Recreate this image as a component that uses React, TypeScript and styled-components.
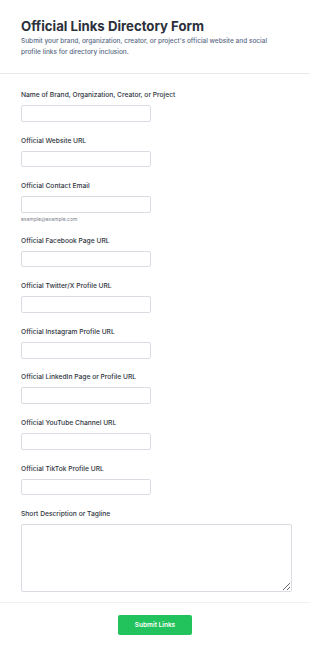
import React from "react";
import styled, { createGlobalStyle } from "styled-components";

const GlobalStyle = createGlobalStyle`
  body {
    margin: 0;
    background: #ffffff;
    font-family: Inter, "Noto Sans", "Liberation Sans", sans-serif;
  }
  * {
    box-sizing: border-box;
  }
`;

const Page = styled.div`
  width: 310px;
  background: #ffffff;
`;

const Header = styled.header`
  padding: 17.5px 21px 15px;
  border-bottom: 1px solid #e8eaee;
`;

const Title = styled.h1`
  margin: 0;
  font-size: 13.2px;
  line-height: 16px;
  font-weight: 700;
  color: #2b303b;
`;

const Subtitle = styled.p`
  margin: 2.5px 0 0;
  font-size: 6.5px;
  line-height: 11px;
  font-weight: 500;
  color: #5a6a84;
  max-width: 265px;
`;

const Body = styled.div`
  padding: 16px 18px 10px 21px;
  border-bottom: 1px solid #eef0f3;
`;

const Field = styled.div`
  margin-bottom: 13.9px;
  &:last-child {
    margin-bottom: 0;
  }
`;

const Label = styled.label`
  display: block;
  font-size: 6.7px;
  line-height: 10px;
  font-weight: 500;
  color: #2f3541;
  margin-bottom: 5px;
`;

const Input = styled.input`
  display: block;
  width: 130px;
  height: 16.7px;
  border: 1px solid #d9dce2;
  border-radius: 2px;
  background: #ffffff;
  padding: 0 5px;
  font-family: inherit;
  font-size: 7px;
`;

const TextArea = styled.textarea`
  display: block;
  width: 100%;
  height: 67.4px;
  border: 1px solid #d9dce2;
  border-radius: 2px;
  resize: vertical;
  font-family: inherit;
  font-size: 7px;
  padding: 4px 5px;
`;

const Hint = styled.div`
  margin-top: 3px;
  font-size: 5px;
  line-height: 6px;
  color: #7b818c;
`;

const Footer = styled.div`
  display: flex;
  justify-content: center;
  padding: 12.7px 0 16px;
`;

const SubmitButton = styled.button`
  width: 74.5px;
  height: 19.6px;
  border: none;
  border-radius: 2px;
  background: #22c25c;
  color: #ffffff;
  font-family: inherit;
  font-size: 6.5px;
  font-weight: 600;
  cursor: pointer;
`;

const fields = [
  { label: "Name of Brand, Organization, Creator, or Project" },
  { label: "Official Website URL" },
  { label: "Official Contact Email", hint: "example@example.com" },
  { label: "Official Facebook Page URL" },
  { label: "Official Twitter/X Profile URL" },
  { label: "Official Instagram Profile URL" },
  { label: "Official LinkedIn Page or Profile URL" },
  { label: "Official YouTube Channel URL" },
  { label: "Official TikTok Profile URL" },
];

const App = () => {
  return (
    <Page>
      <GlobalStyle />
      <Header>
        <Title>Official Links Directory Form</Title>
        <Subtitle>
          Submit your brand, organization, creator, or project's official
          website and social profile links for directory inclusion.
        </Subtitle>
      </Header>
      <Body>
        {fields.map((f) => (
          <Field key={f.label}>
            <Label>{f.label}</Label>
            <Input type="text" />
            {f.hint && <Hint>{f.hint}</Hint>}
          </Field>
        ))}
        <Field>
          <Label>Short Description or Tagline</Label>
          <TextArea />
        </Field>
      </Body>
      <Footer>
        <SubmitButton type="button">Submit Links</SubmitButton>
      </Footer>
    </Page>
  );
};

export default App;
